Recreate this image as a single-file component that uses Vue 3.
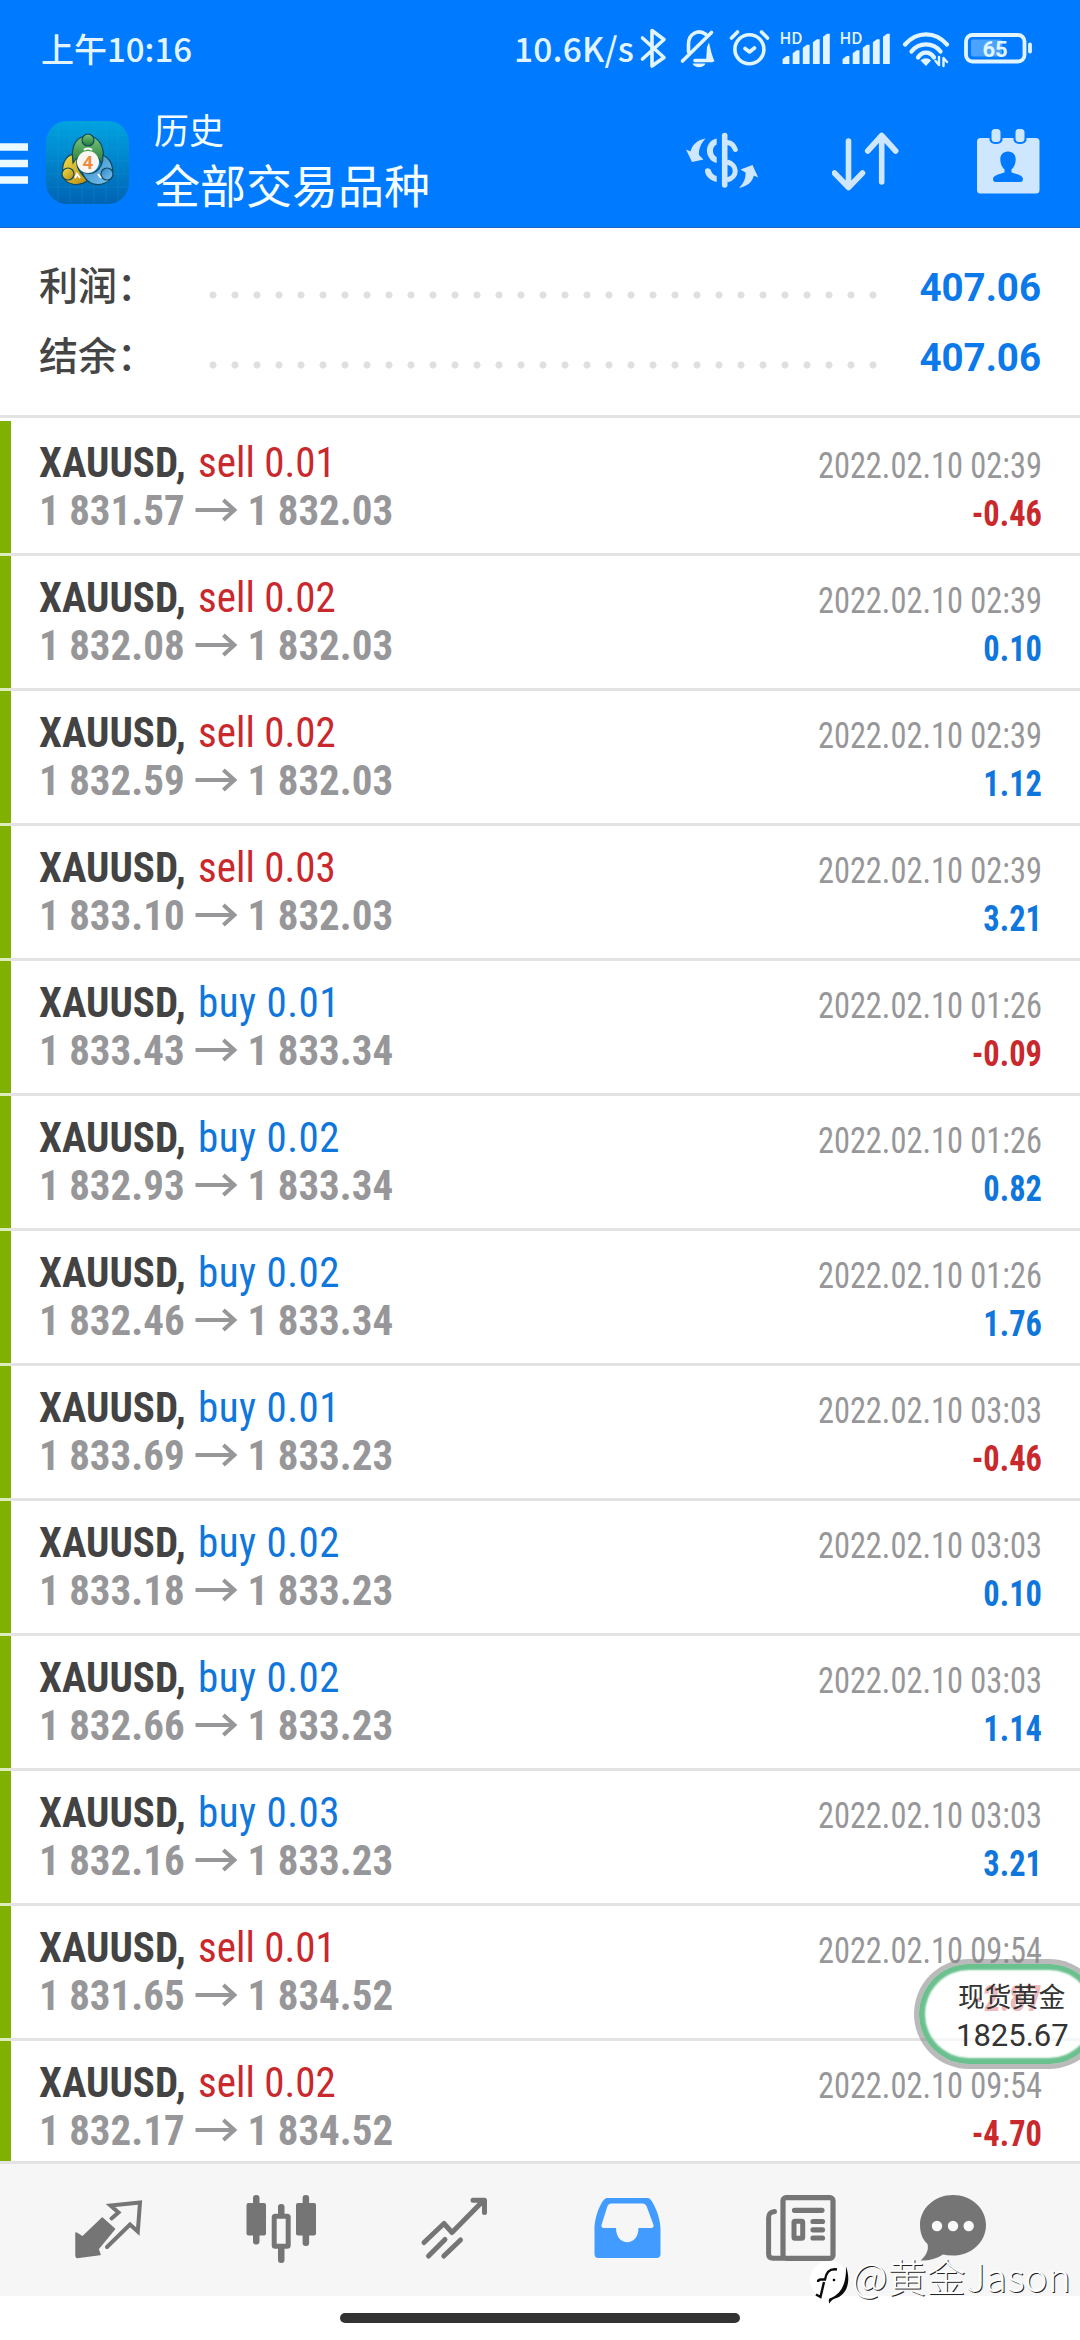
<script setup>
const trades = [
  ['sell', '0.01', '1 831.57', '1 832.03', '02:39', '-0.46'],
  ['sell', '0.02', '1 832.08', '1 832.03', '02:39', '0.10'],
  ['sell', '0.02', '1 832.59', '1 832.03', '02:39', '1.12'],
  ['sell', '0.03', '1 833.10', '1 832.03', '02:39', '3.21'],
  ['buy', '0.01', '1 833.43', '1 833.34', '01:26', '-0.09'],
  ['buy', '0.02', '1 832.93', '1 833.34', '01:26', '0.82'],
  ['buy', '0.02', '1 832.46', '1 833.34', '01:26', '1.76'],
  ['buy', '0.01', '1 833.69', '1 833.23', '03:03', '-0.46'],
  ['buy', '0.02', '1 833.18', '1 833.23', '03:03', '0.10'],
  ['buy', '0.02', '1 832.66', '1 833.23', '03:03', '1.14'],
  ['buy', '0.03', '1 832.16', '1 833.23', '03:03', '3.21'],
  ['sell', '0.01', '1 831.65', '1 834.52', '09:54', '-2.87'],
  ['sell', '0.02', '1 832.17', '1 834.52', '09:54', '-4.70'],
].map(([side, lots, open, close, time, profit]) => ({ side, lots, open, close, time, profit }))

const summary = [
  { label: '利润', value: '407.06' },
  { label: '结余', value: '407.06' },
]
const bars = [56, 50.3, 44.7, 39.3, 33.7]
</script>

<template>
  <div class="screen">
    <header class="header">
      <div class="status">
        <span class="clock">上午10:16</span>
        <span class="speed">10.6K/s</span>
        <svg class="status-icons" width="400" height="50" viewBox="638 24 400 50" fill="none" stroke="#e2f5ff" stroke-linecap="round" stroke-linejoin="round">
          <path d="M642.5 38 664 57.5 652 66V30.500L664 39.500 642.500 59" stroke-width="3.600" />
          <path d="M682.500 61 711.500 32.500M688.500 52V44C688.500 34 698 28.500 706 34.500M695 60.500H712" stroke-width="3.600" />
          <path d="M709 42.500C711 51 711.500 54 714.500 61.500H706L707 47Z" fill="#e2f5ff" stroke="none" />
          <path d="M692.500 63.500h13c-2 5-11 5-13 0Z" fill="#e2f5ff" stroke="none" />
          <circle cx="749.400" cy="49.300" r="14.500" stroke-width="3.600" />
          <path d="M731.500 38 737.500 32M761.500 32 767.500 38M745 48.500l4.500 3.500 5-4" stroke-width="3.600" />
          <g v-for="dx in [0, 60]" :key="dx" fill="#e2f5ff" stroke="none">
            <text :x="779.500 + dx" y="44" class="hd">HD</text>
            <path v-for="(top, i) in bars" :key="i" :d="`M${782.600 + dx + i * 10.100} 64V${top + 3}l4-3h2.800V64Z`" />
          </g>
          <path d="M905 44.500C917 31 935 31 947 44.500M911.500 51.500C919 42 933 42 940.500 51.500M918 57.500C922 51 930 51 934 57.500" stroke-width="4.300" />
          <path d="M920.500 60.500c3-3 8-3 10.500 0l-5 5.500Z" fill="#e2f5ff" stroke="none" />
          <path d="M939 57v8l-3.500-4M943.500 66v-8l3.500 4" stroke-width="2.400" />
          <rect x="966" y="35" width="58.500" height="26.500" rx="6.500" stroke-width="3.800" />
          <rect x="971" y="39.500" width="31" height="17" rx="2" fill="#4aa4ff" stroke="none" />
          <path d="M1030 44.500v7" stroke-width="3.800" />
          <text x="982.500" y="56.500" class="level">65</text>
        </svg>
      </div>
      <div class="appbar">
        <svg class="menu" width="28" height="42" viewBox="0 0 28 42"><path d="M0 4h28M0 20.500h28M0 37h28" stroke="#eafaff" stroke-width="7.500" /></svg>
        <svg class="logo" width="83" height="83" viewBox="0 0 83 83">
          <defs>
            <linearGradient id="tile" x2="0" y2="1"><stop stop-color="#00a3e0" /><stop offset="1" stop-color="#0063b4" /></linearGradient>
            <linearGradient id="green" x2="0" y2="1"><stop stop-color="#7cc47c" /><stop offset="1" stop-color="#1f7a35" /></linearGradient>
            <linearGradient id="gold" x2="1" y2="1"><stop stop-color="#f2e04a" /><stop offset="1" stop-color="#b78a12" /></linearGradient>
            <linearGradient id="sky" x2="1" y2="1"><stop stop-color="#2f86c8" /><stop offset="1" stop-color="#7cc4ee" /></linearGradient>
          </defs>
          <rect width="83" height="83" rx="21" fill="url(#tile)" />
          <path d="M12 2V81M24 1V82M36 0V83M48 0V83M60 1V82M72 3V80M2 14H81M0 27H83M0 40H83M0 53H83M1 66H82" stroke="#39b5e8" stroke-opacity=".16" />
          <g stroke="#12495c" stroke-width="1.200">
            <path d="M17 54C15 40 22 31 34 33C28 41 31 50 42 59C34 66 19 65 17 54Z" fill="url(#gold)" />
            <path d="M27 42C24 22 32 15 42 15C52 15 61 26 56 44C52 30 35 30 27 42Z" fill="url(#green)" />
            <path d="M57 34C69 40 70 58 59 62C49 66 39 62 36 50C46 56 57 50 57 34Z" fill="url(#sky)" />
            <circle cx="42" cy="19" r="6" fill="url(#green)" />
            <circle cx="22" cy="53" r="6" fill="url(#gold)" />
            <circle cx="61" cy="53" r="6" fill="url(#sky)" />
          </g>
          <path d="M38 29c2-2 6-2 8 0M29 57l2-4 3 4M52 53l3 4" stroke="#fff" stroke-width="2" fill="none" />
          <circle cx="42" cy="41" r="11" fill="#f8f6f2" />
          <text x="42" y="47.500" text-anchor="middle" class="four">4</text>
        </svg>
        <div class="titles">
          <span class="section">历史</span>
          <span class="symbols">全部交易品种</span>
        </div>
        <svg class="a-currency" width="74" height="60" viewBox="685 130 74 60" fill="none" stroke="#cfe6ff">
          <path d="M724.700 135.500V185" stroke-width="5.600" stroke-linecap="round" />
          <path d="M727.500 142.500Q733 143 735.300 149.500" stroke-width="5" stroke-linecap="round" />
          <path d="M727 162C738 164.500 738 177.500 727 180" stroke-width="5" />
          <path d="M716.700 138.500v6c-5 2-5 10.500 0 12.500v6c-12.500-3-13.500-21.500 0-24.500Z" fill="#cfe6ff" stroke="none" />
          <path d="M705 170.500c0-3 5-3 6 0 .8 3 2.500 4.500 5.700 5.500v6c-7-2-11.700-6-11.700-11.500Z" fill="#cfe6ff" stroke="none" />
          <path d="M705.500 138.500C697 140 692 145 690.500 151.500L686 149.500 692 162 703.500 159.500 699 155C698.500 149 701 143.500 705.500 138.500Z" fill="#cfe6ff" stroke="none" />
          <path d="M739 188C747 186.500 752.500 182 753.800 175.500L758.200 177.500 752.500 165 740.500 169.500 745.500 172.500C746 178 743.500 183.500 739 188Z" fill="#cfe6ff" stroke="none" />
        </svg>
        <svg class="a-sort" width="68" height="60" viewBox="832 132 68 60" fill="none" stroke="#cfe6ff" stroke-width="5.600" stroke-linecap="round" stroke-linejoin="round">
          <path d="M848.500 141V187.500M834.500 173 848.500 187.500 862.500 173M881.700 182V135.500M867.700 151 881.700 135.500 895.700 151" />
        </svg>
        <svg class="a-calendar" width="64" height="66" viewBox="976 128 64 66">
          <rect x="977" y="138" width="62.500" height="55.500" rx="3.500" fill="#cfe6ff" />
          <path d="M989.500 137h13v3q-1 4-6.500 4t-6.500-4ZM1013.500 137h13v3q-1 4-6.500 4t-6.500-4Z" fill="#007aff" />
          <rect x="991.500" y="129" width="9" height="13" rx="3.500" fill="#cfe6ff" />
          <rect x="1015.500" y="129" width="9" height="13" rx="3.500" fill="#cfe6ff" />
          <path d="M1008 151.500c6 0 8.500 5 7.500 10-.500 4-2 6-4 8v3c5 1.500 11.500 3 11.500 6.500 0 2-1 3-3 3h-24c-2 0-3-1-3-3 0-3.500 6.500-5 11.500-6.500v-3c-2-2-3.500-4-4-8-1-5 1.500-10 7.500-10Z" fill="#007aff" />
        </svg>
      </div>
    </header>

    <section class="summary">
      <div v-for="s in summary" :key="s.label" class="sum-row">
        <span class="sum-label">{{ s.label }}：</span>
        <span class="dots"></span>
        <span class="sum-value">{{ s.value }}</span>
      </div>
    </section>

    <main class="list">
      <article v-for="(t, i) in trades" :key="i" class="trade">
        <div class="left">
          <div class="deal"><b>XAUUSD,</b><span class="order" :class="t.side">{{ t.side }} {{ t.lots }}</span></div>
          <div class="prices">
            <span class="price">{{ t.open }}</span>
            <svg width="44" height="24" viewBox="0 0 44 24" fill="none" stroke="#97979a" stroke-width="4.200"><path d="M0 12H41M29.500 2 41 12 29.500 22" /></svg>
            <span class="price">{{ t.close }}</span>
          </div>
        </div>
        <div class="right">
          <div class="time">2022.02.10 {{ t.time }}</div>
          <div class="profit" :class="t.profit[0] === '-' ? 'sell' : 'buy'">{{ t.profit }}</div>
        </div>
      </article>
    </main>

    <nav class="nav">
      <svg width="1080" height="132" viewBox="0 63 1080 132" fill="none" stroke="#757575" stroke-linecap="round" stroke-linejoin="round">
        <path d="M102.300 117 114.500 128 98 148 100 153.500 77 156.500 76 155V132L82.500 136Z" fill="#757575" stroke-width="1.500" />
        <path d="M111.500 117.500 118.500 111.500 110.500 104.500 140 101.500 137.800 130.500 130 123.500 107 146" stroke-width="4" stroke-linejoin="miter" />
        <g fill="#757575" stroke="none">
          <rect x="246.500" y="102" width="19.500" height="32.500" rx="2" /><rect x="253" y="94" width="6.500" height="49.500" rx="3" />
          <rect x="296" y="102" width="20" height="32.500" rx="2" /><rect x="302.600" y="94" width="6.500" height="51" rx="3" />
          <rect x="278" y="103" width="6.500" height="12" rx="3" /><rect x="278" y="145" width="6.500" height="17" rx="3" />
        </g>
        <rect x="274.200" y="115.200" width="14" height="30" rx="1" stroke-width="5" />
        <path d="M424 141.500 444 122.500 452 131.500 483 100M473 99.200H484.500V111.500M428.500 155 445 138.500M443.800 155 460.500 139" stroke-width="5" />
        <path d="M607 97H648C652 97 660.500 115 660.500 128V153Q660.500 157 656.500 157H598.500Q594.500 157 594.500 153V128C594.500 115 602 97 607 97ZM611 102.500Q608.500 102.500 607.500 105L601.500 124Q601 127 604 127H616C616 146 638.500 146 638.500 127H651Q654 127 653.500 124L646.500 105Q645.500 102.500 643 102.500Z" fill="#429cff" fill-rule="evenodd" stroke="none" />
        <rect x="783" y="96.600" width="50" height="60.700" rx="3" stroke-width="5.200" />
        <path d="M774.500 110.500C770 111 768.600 113 768.600 117V153Q768.600 157.300 773 157.300H783" stroke-width="5" />
        <path d="M794.500 109.300H822M813 120.500H822.500M813 128.800H822.500M813 137H822.500" stroke-width="5.200" />
        <rect x="794" y="120.300" width="8.700" height="17" rx="1" stroke-width="5" />
        <path d="M953 94C971 94 986 107 986 124S971 154.600 953 154.600Q947 154.600 943 153.500C936 158 928 160 920.500 159.500C926 155 929 149 927.500 143C922 138 920 131 920 124C920 107 935 94 953 94Z" fill="#757575" stroke="none" />
        <g fill="#fafafa" stroke="none"><circle cx="937" cy="125" r="5.200" /><circle cx="953" cy="125" r="5.200" /><circle cx="968.700" cy="125" r="5.200" /></g>
      </svg>
    </nav>
    <footer class="gesture"><i></i></footer>

    <aside class="bubble"><span>现货黄金</span><strong>1825.67</strong></aside>

    <div class="watermark">
      <svg width="42" height="46" viewBox="0 0 42 46">
        <circle cx="19" cy="20" r="19" fill="#fff" />
        <path d="M36 6.500C41 20 38 35 25 38.500Q21.500 39.500 19.500 43.500Q18 40 19.500 38.500C29 35 36.500 27 36 6.500Z" fill="#0a0a0a" />
        <path d="M27 9.500C18 8 16 14 15 19.500H11Q8 19.500 8 22M14 22 10.500 37 6 34.500" fill="none" stroke="#0a0a0a" stroke-width="2.400" />
        <circle cx="24" cy="20" r="1.300" />
      </svg>
      <span class="author">@黄金Jason</span>
    </div>
  </div>
</template>

<style>
body { background: #fff; overflow: hidden; }
</style>

<style scoped>
.screen { position: relative; width: 1080px; height: 2340px; overflow: hidden; display: flex; flex-direction: column; background: #fff; font-family: Roboto, "Noto Sans CJK SC", sans-serif; }
svg { display: block; flex: none; }
.header { box-sizing: border-box; height: 228px; flex: none; background: #007aff; border-bottom: 1px solid #1668c4; }
.status { display: flex; height: 97px; padding: 24px 42px 0 41px; box-sizing: border-box; align-items: flex-start; color: #e2f5ff; font: 500 33px/48px "Noto Sans CJK SC", sans-serif; white-space: nowrap; }
.clock { width: 473px; }
.speed { width: 124px; font-size: 33.500px; letter-spacing: .2px; }
.hd { font: 500 16px "Noto Sans CJK SC", sans-serif; }
.level { font: 700 22px Roboto, sans-serif; fill: #e2f5ff; stroke: none; }
.appbar { display: flex; height: 130px; align-items: flex-start; }
.menu { margin-top: 46px; }
.logo { margin: 24px 25px 0 18px; }
.four { font: 700 18px "Open Sans", sans-serif; fill: #ee8a3c; }
.titles { display: flex; flex-direction: column; width: 531px; color: #f4fdff; font-family: "Noto Sans CJK SC", sans-serif; white-space: nowrap; }
.section { font-size: 35px; line-height: 40px; margin-top: 12px; }
.symbols { font-size: 46px; line-height: 60px; margin-top: 4px; }
.a-currency { margin: 33px 73px 0 0; }
.a-sort { margin: 35px 76px 0 0; }
.a-calendar { margin-top: 31px; }
.summary { box-sizing: border-box; height: 190px; flex: none; padding: 23px 39px 0 39px; border-bottom: 3px solid #e3e3e3; margin-bottom: 3px; }
.sum-row { display: flex; height: 70px; align-items: center; }
.sum-label { width: 163px; padding-bottom: 5px; color: #454545; font: 500 39px/65px "Noto Sans CJK SC", sans-serif; white-space: nowrap; }
.dots { width: 682px; height: 8px; margin-top: 17px; background: radial-gradient(circle, #dfdfdf 3.200px, transparent 3.900px) 0 0 / 22px 8px; }
.sum-value { margin-left: auto; padding-top: 3px; color: #0b79ea; font-weight: 700; font-size: 38.500px; }
.list { height: 1740px; flex: none; overflow: hidden; }
.trade { box-sizing: border-box; display: flex; justify-content: space-between; height: 135px; padding: 17px 38px 0 39px; box-shadow: inset 11px 0 #80b000; border: 0 solid; border-bottom-width: 3px; border-image: linear-gradient(to right, #dcedbb 11px, #e3e3e3 11px) 1; font-stretch: 75%; font-family: "Roboto Condensed", Roboto, sans-serif; white-space: nowrap; }
.left { font-size: 43px; line-height: 48px; transform: scaleX(.953); transform-origin: left; }
.deal { display: flex; gap: 13px; color: #434343; }
.order.buy { letter-spacing: .5px; }
.prices { display: flex; align-items: center; gap: 11px; color: #97979a; font-weight: 700; }
.right { padding-top: 4px; font-size: 36px; line-height: 48px; text-align: right; transform: scaleX(.9); transform-origin: right; }
.time { color: #97979a; }
.profit { font-weight: 700; }
.sell { color: #c9282d; }
.buy { color: #0f76dc; }
.nav { height: 132px; flex: none; border-top: 3px solid #e3e3e3; background: #f6f6f7; }
.gesture { display: flex; justify-content: center; flex: none; height: 44px; padding-top: 17px; box-sizing: border-box; }
.gesture i { width: 400px; height: 10px; border-radius: 5px; background: #333; }
.bubble { position: absolute; box-sizing: border-box; left: 914px; top: 1959px; width: 190px; height: 110px; border-radius: 55px; border: 5px solid rgba(130, 130, 130, .55); box-shadow: inset 0 0 2px 6px #6ac18e; background: rgba(255, 255, 255, .68); background-clip: padding-box; padding: 15px 0 0 37px; display: flex; flex-direction: column; color: #333; }
.bubble span { font: 400 26.800px/34px "Noto Sans CJK SC", sans-serif; margin-left: 2px; }
.bubble strong { font-weight: 400; font-size: 31px; line-height: 42px; margin-top: 2px; }
.watermark { position: absolute; left: 810px; top: 2260px; display: flex; align-items: flex-start; color: #fff; text-shadow: 1px 1px 0 #222; font: 300 39px/38px "Noto Sans CJK SC", sans-serif; white-space: nowrap; }
.author { margin-top: -4px; }
</style>
